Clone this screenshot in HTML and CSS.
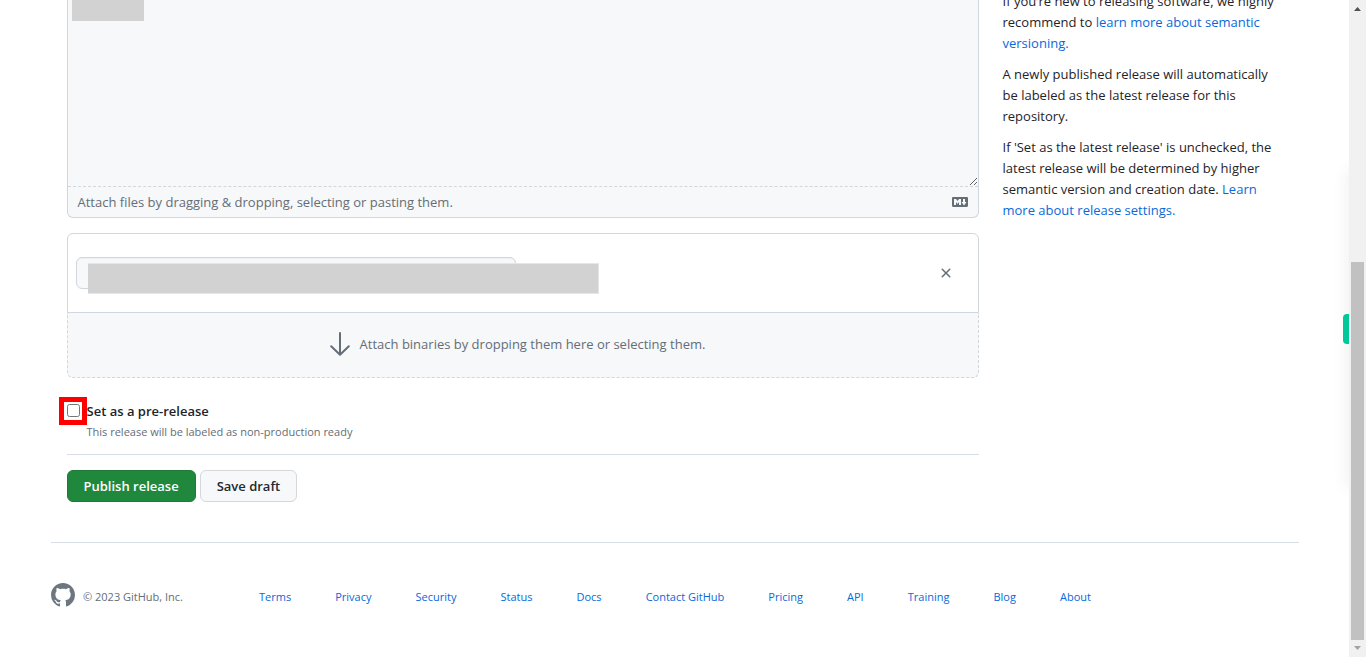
FILE: index.html
```html
<!DOCTYPE html>
<html lang="en">
<head>
<meta charset="utf-8">
<title>New release</title>
<link rel="stylesheet" href="styles.css">
</head>
<body>
<div class="page">
  <div class="content">
    <main class="release">
      <section class="editor">
        <textarea class="editor-text" aria-label="Describe this release"></textarea>
        <span class="mask mask-text"></span>
        <div class="editor-foot">
          <span>Attach files by dragging &amp; dropping, selecting or pasting them.</span>
          <a class="markdown" href="#" aria-label="Styling with Markdown is supported">
            <svg width="16" height="16" viewBox="0 0 16 16" fill="currentColor"><path d="M14.85 3c.63 0 1.15.52 1.14 1.15v7.7c0 .63-.51 1.15-1.15 1.15H1.15C.52 13 0 12.48 0 11.84V4.15C0 3.52.52 3 1.15 3ZM9 11V5H7L5.500 7 4 5H2v6h2V8l1.500 1.920L7 8v3Zm2.990.500L14.500 8H13V5h-2v3H9.500Z"/></svg>
          </a>
        </div>
      </section>
      <section class="assets">
        <div class="asset">
          <div class="asset-field">
            <input class="asset-name" type="text" aria-label="File name">
            <span class="mask mask-name"></span>
          </div>
          <button class="remove" type="button" aria-label="Remove file">
            <svg width="16" height="16" viewBox="0 0 16 16" fill="currentColor"><path d="M3.72 3.72a.75.75 0 0 1 1.060 0L8 6.940l3.220-3.220a.749.749 0 0 1 1.275.326.749.749 0 0 1-.215.734L9.060 8l3.220 3.220a.749.749 0 0 1-.326 1.275.749.749 0 0 1-.734-.215L8 9.060l-3.220 3.220a.751.751 0 0 1-1.042-.018.751.751 0 0 1-.018-1.042L6.940 8 3.720 4.780a.75.75 0 0 1 0-1.060Z"/></svg>
          </button>
        </div>
        <div class="dropzone">
          <svg width="24" height="24" viewBox="0 0 24 24" fill="none" stroke="currentColor" stroke-width="2" stroke-linecap="round" stroke-linejoin="round"><path d="M12 1v21.500M3.200 14.200 12 22.800l8.800-8.600"/></svg>
          <span>Attach binaries by dropping them here or selecting them.</span>
        </div>
      </section>
      <div class="option">
        <span class="check"><input class="checkbox" type="checkbox" id="prerelease"></span>
        <div class="option-body">
          <label class="option-title" for="prerelease">Set as a pre-release</label>
          <p class="option-note">This release will be labeled as non-production ready</p>
        </div>
      </div>
      <div class="actions">
        <button class="btn btn-primary" type="button">Publish release</button>
        <button class="btn" type="button">Save draft</button>
      </div>
    </main>
    <aside class="help">
      <p>If you’re new to releasing software, we highly recommend to <a href="#">learn more about semantic versioning.</a></p>
      <p>A newly published release will automatically be labeled as the latest release for this repository.</p>
      <p>If 'Set as the latest release' is unchecked, the latest release will be determined by higher semantic version and creation date. <a href="#">Learn more about release settings.</a></p>
    </aside>
  </div>
  <footer class="footer">
    <div class="brand">
      <svg width="24" height="24" viewBox="0 0 16 16" fill="currentColor"><path d="M8 0c4.420 0 8 3.580 8 8a8.013 8.013 0 0 1-5.450 7.590c-.4.080-.55-.17-.55-.38 0-.27.010-1.130.010-2.200 0-.75-.25-1.230-.54-1.480 1.780-.2 3.650-.88 3.650-3.950 0-.88-.31-1.590-.82-2.150.080-.2.360-1.020-.08-2.120 0 0-.67-.22-2.200.82-.64-.18-1.320-.27-2-.27-.68 0-1.360.090-2 .27-1.530-1.030-2.200-.82-2.200-.82-.44 1.100-.16 1.920-.08 2.120-.51.560-.82 1.280-.82 2.150 0 3.060 1.860 3.750 3.640 3.950-.23.200-.44.550-.51 1.070-.46.210-1.610.550-2.330-.66-.15-.24-.6-.83-1.230-.82-.67.010-.27.380.010.530.34.190.73.900.82 1.130.16.450.68 1.310 2.690.940 0 .67.010 1.300.010 1.490 0 .21-.15.450-.55.380A7.995 7.995 0 0 1 0 8c0-4.420 3.580-8 8-8Z"/></svg>
      <span class="copyright">© 2023 GitHub, Inc.</span>
    </div>
    <nav class="links">
      <a href="#">Terms</a><a href="#">Privacy</a><a href="#">Security</a><a href="#">Status</a><a href="#">Docs</a><a href="#">Contact GitHub</a><a href="#">Pricing</a><a href="#">API</a><a href="#">Training</a><a href="#">Blog</a><a href="#">About</a>
    </nav>
  </footer>
  <div class="side-shade"><span class="side-tab"></span></div>
</div>
<div class="scrollbar">
  <svg width="17" height="17" viewBox="0 0 17 17" fill="#505050"><path d="M5 11h7L8.500 7Z"/></svg>
  <span class="thumb"></span>
  <svg width="17" height="17" viewBox="0 0 17 17" fill="#a3a3a3"><path d="M5 6h7L8.500 10Z"/></svg>
</div>
</body>
</html>
```
FILE: styles.css
```css
* { box-sizing: border-box; }
body {
  margin: 0;
  height: 100vh;
  display: flex;
  overflow: hidden;
  background: #fff;
  color: #1f2328;
  font: 13px/21px "Open Sans", "Noto Sans", sans-serif;
}
a { color: #0969da; text-decoration: none; }
p { margin: 0; }
svg { display: block; flex: none; }
button, input, textarea { font: inherit; }

.page { flex: 1; position: relative; overflow: hidden; }
.content {
  max-width: 1280px;
  margin: 0 auto;
  padding: 0 32px;
  display: grid;
  grid-template-columns: 1fr 280px;
  gap: 24px;
}

.editor {
  position: relative;
  border: 1px solid #d0d7de;
  border-top: 0;
  border-radius: 0 0 6px 6px;
  background: #f6f8fa;
  overflow: hidden;
}
.editor-text {
  display: block;
  width: 100%;
  height: 187px;
  border: 0;
  border-bottom: 1px dashed #d0d7de;
  background: transparent;
  outline: 0;
  resize: vertical;
}
.mask { position: absolute; background: #d2d2d2; }
.mask-text { left: 4px; top: 0; width: 72px; height: 21px; }
.editor-foot {
  display: flex;
  justify-content: space-between;
  align-items: center;
  height: 30px;
  padding: 0 10px;
  color: #656d76;
}
.markdown { color: #656d76; }

.assets { margin-top: 15px; }
.asset {
  display: flex;
  justify-content: space-between;
  align-items: center;
  height: 80px;
  padding: 0 16px 0 8px;
  border: 1px solid #d0d7de;
  border-radius: 6px 6px 0 0;
}
.asset-field { position: relative; width: 440px; }
.asset-name {
  display: block;
  width: 100%;
  height: 32px;
  border: 1px solid #d0d7de;
  border-radius: 6px;
  background: #f6f8fa;
  box-shadow: inset 0 1px 0 rgba(208, 215, 222, .2);
}
.mask-name {
  left: 12px;
  top: 6px;
  width: 511px;
  height: 31px;
  border: solid #e6e6e6;
  border-width: 1px 1px 1px 0;
}
.remove {
  width: 32px;
  height: 32px;
  padding: 8px;
  border: 0;
  background: none;
  color: #656d76;
}
.dropzone {
  display: flex;
  justify-content: center;
  align-items: center;
  gap: 8px;
  height: 65px;
  padding: 0 12px 2px 0;
  border: 1px dashed #d0d7de;
  border-top: 0;
  border-radius: 0 0 6px 6px;
  background: #f6f8fa;
  color: #656d76;
}

.option {
  display: flex;
  gap: 7px;
  padding: 22px 0 13px;
  border-bottom: 1px solid #d8dee4;
}
.check { position: relative; width: 13px; height: 13px; margin-top: 4px; }
.check::after {
  content: "";
  position: absolute;
  inset: -7px -7px -8px -8px;
  border: 5px solid #f00;
  pointer-events: none;
}
.checkbox { display: block; width: 13px; height: 13px; margin: 0; }
.option-body { padding-top: 1px; }
.option-title { display: block; font-weight: 600; }
.option-note { color: #656d76; font-size: 11px; line-height: 19px; }

.actions { display: flex; gap: 4px; padding: 15px 0 40px; }
.btn {
  height: 32px;
  padding: 0 16px;
  border: 1px solid #d5d8da;
  border-radius: 6px;
  background: #f6f8fa;
  color: #24292f;
  font-weight: 600;
}
.btn-primary { border-color: #1f7a38; background: #1f883d; color: #fff; }

.help { margin-top: -9px; }
.help p + p { margin-top: 10px; }

.footer {
  max-width: 1248px;
  margin: 0 50px 0 51px;
  padding: 40px 0;
  display: grid;
  grid-template-columns: 2fr 8fr 2fr;
  align-items: center;
  border-top: 1px solid #d8dee4;
  color: #656d76;
  font-size: 11px;
}
.brand { display: flex; align-items: center; gap: 8px; }
.brand svg { color: #6e7781; }
.copyright, .links { padding-top: 2px; }
.links { display: flex; justify-content: space-between; }

.side-shade {
  position: absolute;
  right: -8px;
  top: 170px;
  width: 8px;
  height: 318px;
  box-shadow: 0 0 16px rgba(0, 0, 0, .1);
}
.side-tab {
  position: absolute;
  right: 8px;
  top: 144px;
  width: 6px;
  height: 30px;
  border-radius: 4px 0 0 4px;
  background: #00c898;
}

.scrollbar {
  width: 17px;
  display: flex;
  flex-direction: column;
  background: #f1f1f1;
}
.thumb { height: 378px; margin: auto 2px 0; background: #c1c1c1; }
```
